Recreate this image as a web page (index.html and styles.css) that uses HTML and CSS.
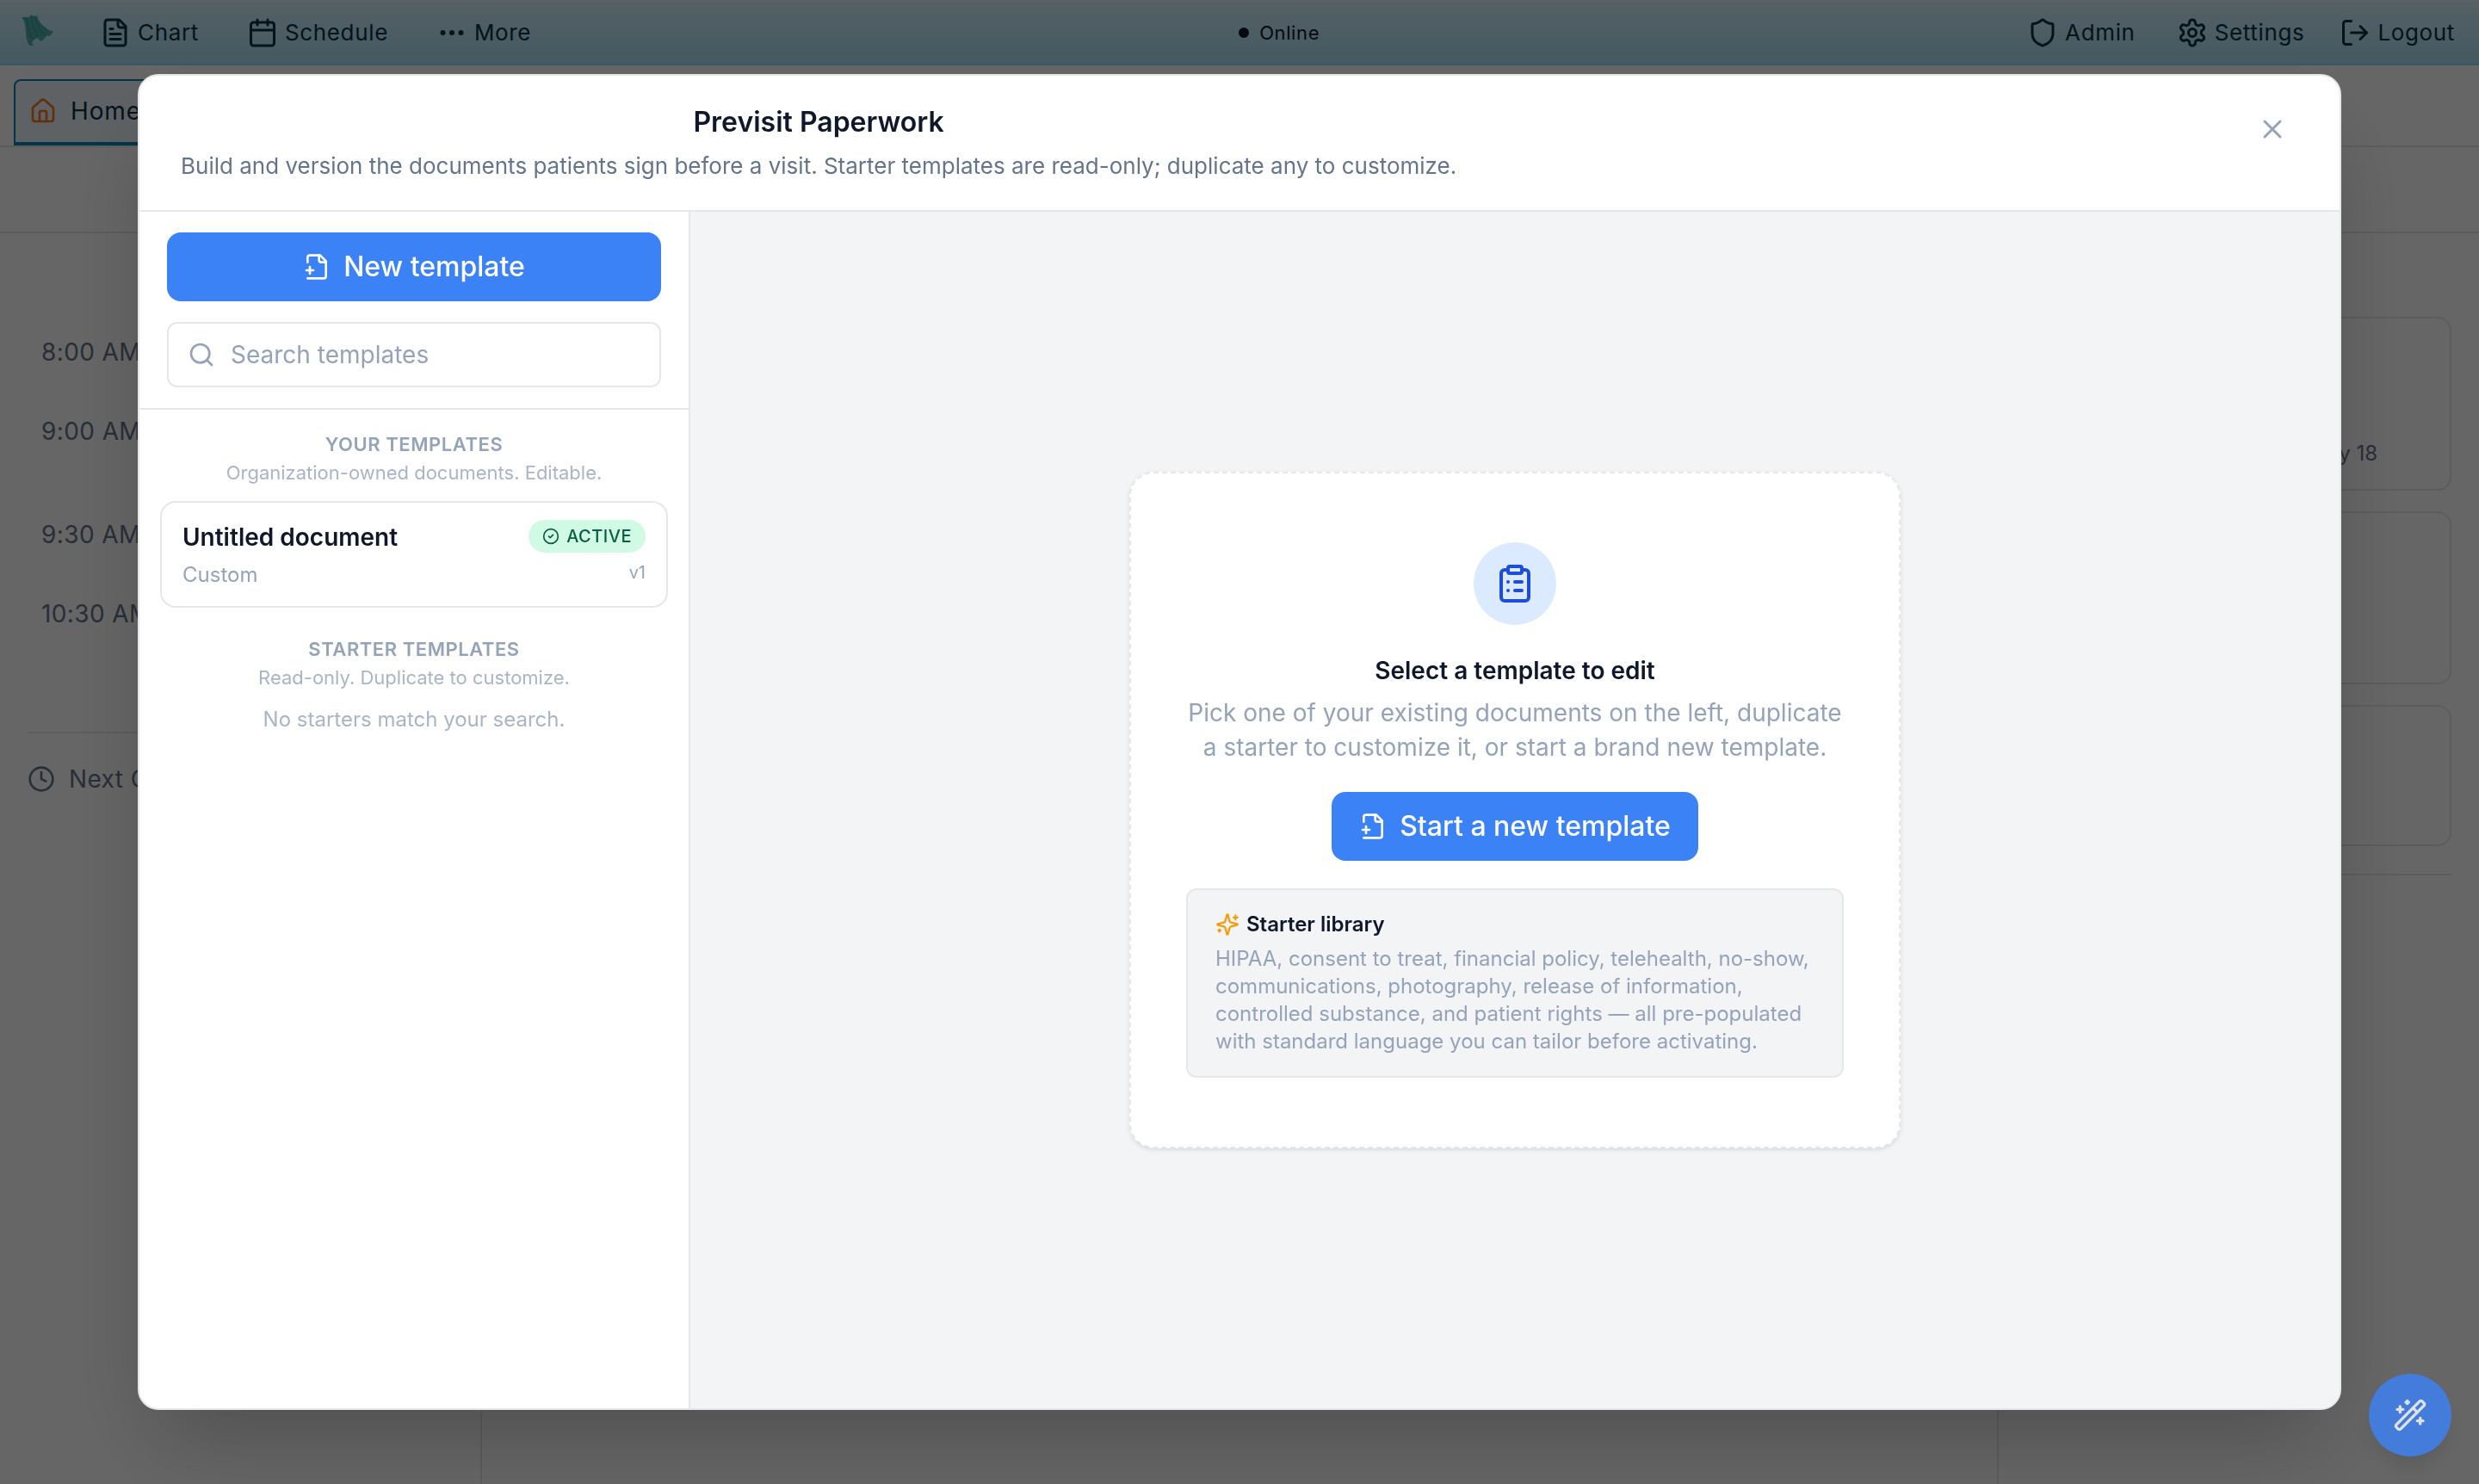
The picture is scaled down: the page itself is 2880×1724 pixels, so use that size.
FILE: index.html
```html
<!DOCTYPE html>
<html lang="en">
<head>
<meta charset="utf-8">
<title>Previsit Paperwork</title>
<link rel="stylesheet" href="styles.css">
</head>
<body>
<svg class="sprite" aria-hidden="true">
  <symbol id="file-plus" viewBox="0 0 24 24"><path d="M4 22h14a2 2 0 0 0 2-2V7l-5-5H6a2 2 0 0 0-2 2v4"/><path d="M14 2v4a2 2 0 0 0 2 2h4"/><path d="M3 15h6"/><path d="M6 12v6"/></symbol>
</svg>

<div class="app">
  <nav class="navbar">
    <svg class="logo" viewBox="0 0 38 37"><path d="M0 3.500Q3 2.500 6 3Q10 3.500 11 .5Q14 2.500 18 1C19 8 25 13 28 15C31 18 34 19 37 19C36 22 34 24 32 25C30 25 29 24 28.500 25C27 28 25 30 22 31L20 29L19 27C16 28 14 29 13 31C12 33 12 35 14 36C10 37 8 35 7 32C5 27 5 21 4.500 15C4 10 3 6 0 3.500Z"/><path class="fold" d="M6 3c1 9 2 17 6 25M11 1c1 9 4 17 8 25M16 3c1 9 6 16 12 21"/></svg>
    <div class="nav-group">
      <a class="nav-item"><svg class="icon i36" viewBox="0 0 24 24"><path d="M15 2H6a2 2 0 0 0-2 2v16a2 2 0 0 0 2 2h12a2 2 0 0 0 2-2V7Z"/><path d="M14 2v4a2 2 0 0 0 2 2h4"/><path d="M10 9H8"/><path d="M16 13H8"/><path d="M16 17H8"/></svg>Chart</a>
      <a class="nav-item"><svg class="icon i36" viewBox="0 0 24 24"><path d="M8 2v4"/><path d="M16 2v4"/><rect width="18" height="18" x="3" y="4" rx="2"/><path d="M3 10h18"/></svg>Schedule</a>
      <a class="nav-item"><svg class="icon i36" viewBox="0 0 24 24"><circle cx="12" cy="12" r="1"/><circle cx="19" cy="12" r="1"/><circle cx="5" cy="12" r="1"/></svg>More</a>
    </div>
    <div class="status"><span class="status-dot"></span>Online</div>
    <div class="nav-group nav-right">
      <a class="nav-item"><svg class="icon i36" viewBox="0 0 24 24"><path d="M20 13c0 5-3.500 7.500-7.660 8.950a1 1 0 0 1-.67-.01C7.500 20.500 4 18 4 13V6a1 1 0 0 1 1-1c2 0 4.500-1.200 6.240-2.720a1.170 1.170 0 0 1 1.520 0C14.510 3.810 17 5 19 5a1 1 0 0 1 1 1z"/></svg>Admin</a>
      <a class="nav-item"><svg class="icon i36" viewBox="0 0 24 24"><path d="M12.220 2h-.44a2 2 0 0 0-2 2v.18a2 2 0 0 1-1 1.730l-.43.25a2 2 0 0 1-2 0l-.15-.08a2 2 0 0 0-2.730.73l-.22.38a2 2 0 0 0 .73 2.730l.15.1a2 2 0 0 1 1 1.720v.51a2 2 0 0 1-1 1.740l-.15.09a2 2 0 0 0-.73 2.730l.22.38a2 2 0 0 0 2.730.73l.15-.08a2 2 0 0 1 2 0l.43.25a2 2 0 0 1 1 1.730V20a2 2 0 0 0 2 2h.44a2 2 0 0 0 2-2v-.18a2 2 0 0 1 1-1.730l.43-.25a2 2 0 0 1 2 0l.15.08a2 2 0 0 0 2.730-.73l.22-.39a2 2 0 0 0-.73-2.730l-.15-.08a2 2 0 0 1-1-1.740v-.5a2 2 0 0 1 1-1.740l.15-.09a2 2 0 0 0 .73-2.730l-.22-.38a2 2 0 0 0-2.730-.73l-.15.08a2 2 0 0 1-2 0l-.43-.25a2 2 0 0 1-1-1.730V4a2 2 0 0 0-2-2z"/><circle cx="12" cy="12" r="3"/></svg>Settings</a>
      <a class="nav-item logout"><svg class="icon i36" viewBox="0 0 24 24"><path d="M9 21H5a2 2 0 0 1-2-2V5a2 2 0 0 1 2-2h4"/><path d="m16 17 5-5-5-5"/><path d="M21 12H9"/></svg>Logout</a>
    </div>
  </nav>

  <div class="tabs">
    <div class="tab"><svg class="icon i32 home-icon" viewBox="0 0 24 24"><path d="M15 21v-8a1 1 0 0 0-1-1h-4a1 1 0 0 0-1 1v8"/><path d="M3 10a2 2 0 0 1 .709-1.528l7-5.999a2 2 0 0 1 2.582 0l7 5.999A2 2 0 0 1 21 10v9a2 2 0 0 1-2 2H5a2 2 0 0 1-2-2z"/></svg>Home</div>
  </div>
  <div class="toolbar"></div>

  <div class="board">
    <aside class="day">
      <div class="slot">8:00 AM</div>
      <div class="slot slot-tall">9:00 AM</div>
      <div class="slot">9:30 AM</div>
      <div class="slot slot-last">10:30 AM</div>
      <div class="next"><svg class="icon i32" viewBox="0 0 24 24"><circle cx="12" cy="12" r="10"/><path d="M12 6v6l4 2"/></svg>Next Opening</div>
    </aside>
    <main class="center"></main>
    <aside class="cards">
      <div class="bg-card first">May 18</div>
      <div class="bg-card"></div>
      <div class="bg-card short"></div>
      <div class="rule"></div>
    </aside>
  </div>
</div>

<button class="fab"><svg class="icon i40" viewBox="0 0 24 24"><path d="m21.640 3.640-1.280-1.280a1.210 1.210 0 0 0-1.720 0L2.360 18.640a1.210 1.210 0 0 0 0 1.720l1.280 1.280a1.200 1.200 0 0 0 1.720 0L21.640 5.360a1.200 1.200 0 0 0 0-1.720"/><path d="m14 7 3 3"/><path d="M5 6v4"/><path d="M19 14v4"/><path d="M10 2v2"/><path d="M7 8H3"/><path d="M21 16h-4"/><path d="M11 3H9"/></svg></button>

<div class="overlay">
  <div class="modal">
    <header class="modal-head">
      <div class="modal-titles">
        <h1>Previsit Paperwork</h1>
        <p>Build and version the documents patients sign before a visit. Starter templates are read-only; duplicate any to customize.</p>
      </div>
      <svg class="icon i36 close" viewBox="0 0 24 24"><path d="M18 6 6 18"/><path d="m6 6 12 12"/></svg>
    </header>
    <div class="modal-body">
      <section class="sidebar">
        <div class="actions">
          <button class="btn"><svg class="icon i32"><use href="#file-plus"/></svg>New template</button>
          <div class="search"><svg class="icon i32" viewBox="0 0 24 24"><circle cx="11" cy="11" r="8"/><path d="m21 21-4.300-4.300"/></svg>Search templates</div>
        </div>
        <div class="list">
          <h2>YOUR TEMPLATES</h2>
          <p class="hint">Organization-owned documents. Editable.</p>
          <article class="template">
            <div class="row">
              <h3>Untitled document</h3>
              <span class="badge"><svg class="icon i20" viewBox="0 0 24 24"><circle cx="12" cy="12" r="10"/><path d="m9 12 2 2 4-4"/></svg>ACTIVE</span>
            </div>
            <div class="row meta"><span>Custom</span><span class="version">v1</span></div>
          </article>
          <h2>STARTER TEMPLATES</h2>
          <p class="hint">Read-only. Duplicate to customize.</p>
          <p class="none">No starters match your search.</p>
        </div>
      </section>
      <section class="stage">
        <div class="empty">
          <div class="bubble"><svg class="icon i48" viewBox="0 0 24 24"><rect width="8" height="4" x="8" y="2" rx="1" ry="1"/><path d="M16 4h2a2 2 0 0 1 2 2v14a2 2 0 0 1-2 2H6a2 2 0 0 1-2-2V6a2 2 0 0 1 2-2h2"/><path d="M12 11h4"/><path d="M12 16h4"/><path d="M8 11h.01"/><path d="M8 16h.01"/></svg></div>
          <h2 class="empty-title">Select a template to edit</h2>
          <p class="empty-text">Pick one of your existing documents on the left, duplicate a starter to customize it, or start a brand new template.</p>
          <button class="btn"><svg class="icon i32"><use href="#file-plus"/></svg>Start a new template</button>
          <div class="library">
            <h3><svg class="icon i28" viewBox="0 0 24 24"><path d="M9.937 15.500A2 2 0 0 0 8.500 14.063l-6.135-1.582a.5.5 0 0 1 0-.962L8.500 9.936A2 2 0 0 0 9.937 8.500l1.582-6.135a.5.5 0 0 1 .963 0L14.063 8.500A2 2 0 0 0 15.500 9.937l6.135 1.581a.5.5 0 0 1 0 .964L15.500 14.063a2 2 0 0 0-1.437 1.437l-1.582 6.135a.5.5 0 0 1-.963 0z"/><path d="M20 3v4"/><path d="M22 5h-4"/><path d="M4 17v2"/><path d="M5 18H3"/></svg>Starter library</h3>
            <p>HIPAA, consent to treat, financial policy, telehealth, no-show, communications, photography, release of information, controlled substance, and patient rights — all pre-populated with standard language you can tailor before activating.</p>
          </div>
        </div>
      </section>
    </div>
  </div>
</div>
</body>
</html>
```
FILE: styles.css
```css
* { box-sizing: border-box; margin: 0; padding: 0; }
html, body { width: 2880px; height: 1724px; overflow: hidden; }
body { font-family: Inter, "Liberation Sans", sans-serif; font-size: 28px; color: #0f172a; background: #fff; }
button { font: inherit; border: 0; }
.sprite { position: absolute; width: 0; height: 0; }

.icon { flex: none; fill: none; stroke: currentColor; stroke-width: 2; stroke-linecap: round; stroke-linejoin: round; overflow: visible; }
.i20 { width: 20px; height: 20px; }
.i28 { width: 28px; height: 28px; }
.i32 { width: 32px; height: 32px; }
.i36 { width: 36px; height: 36px; }
.i40 { width: 40px; height: 40px; }
.i48 { width: 48px; height: 48px; }

/* Application behind the dialog */
.app { display: flex; flex-direction: column; height: 1724px; }
.navbar { display: flex; align-items: center; height: 76px; flex: none; padding: 0 28px 1px 25px; border-top: 2px solid #e2f4fa; border-bottom: 2px solid #95dcf2; background: linear-gradient(#d3f0fb, #a9dff5); color: #083344; }
.logo { width: 38px; height: 37px; margin: -4px 53px 0 0; fill: #4fb0ad; }
.logo .fold { fill: none; stroke: #389b9b; stroke-width: 1.200; }
.nav-group { display: flex; gap: 56px; }
.nav-item { display: flex; align-items: center; gap: 8px; font-size: 26px; letter-spacing: .65px; line-height: 36px; }
.nav-right { margin-left: auto; gap: 48px; }
.logout { margin-left: -7px; }
.status { display: flex; align-items: center; gap: 12px; margin-left: 822px; font-size: 22px; letter-spacing: .6px; color: #0f172a; }
.status-dot { width: 12px; height: 12px; border-radius: 50%; background: currentColor; }

.tabs { display: flex; align-items: flex-end; flex: none; height: 95px; padding-left: 16px; border-bottom: 2px solid #e5e7eb; }
.tab { display: flex; align-items: center; gap: 16px; width: 200px; height: 77px; padding: 0 16px 2px; border: 2px solid #0284b7; border-bottom-width: 4px; border-radius: 8px 8px 0 0; background: #ebf5fb; color: #083344; letter-spacing: .84px; }
.home-icon { color: #f97316; }
.toolbar { flex: none; height: 100px; border-bottom: 2px solid #e5e7eb; }

.board { display: grid; grid-template-columns: 560px 1fr 560px; flex: 1; color: #64748b; }
.day { border-right: 2px solid #e5e7eb; padding: 118px 32px 0; letter-spacing: .4px; }
.slot { height: 92px; padding-left: 16px; line-height: 40px; }
.slot-tall { height: 120px; }
.slot-last { height: 157px; }
.next { display: flex; align-items: center; gap: 16px; height: 108px; border-top: 2px solid #e5e7eb; }
.cards { display: flex; flex-direction: column; gap: 24px; border-left: 2px solid #e5e7eb; padding: 97px 32px 0; }
.bg-card { height: 201px; border: 2px solid #e5e7eb; border-radius: 16px; }
.bg-card.first { display: flex; justify-content: flex-end; align-items: flex-end; height: 202px; padding: 0 84px 25px 0; font-size: 24px; line-height: 32px; }
.bg-card.short { height: 164px; }
.rule { margin-top: 8px; border-top: 2px solid #e5e7eb; }

.fab { position: fixed; right: 32px; bottom: 32px; z-index: 30; display: grid; place-items: center; width: 96px; height: 96px; border-radius: 50%; background: #437cda; color: #dfe0e2; box-shadow: 0 16px 24px -8px rgba(0, 0, 0, .12); }

/* Dialog */
.overlay { position: fixed; inset: 0; z-index: 20; display: grid; place-items: center; background: rgba(0, 0, 0, .6); }
.modal { display: flex; flex-direction: column; width: 2560px; height: 1552px; overflow: hidden; border: 2px solid #e5e7eb; border-radius: 24px; background: #fff; box-shadow: 0 50px 100px -24px rgba(0, 0, 0, .25); }
.modal-head { display: flex; justify-content: space-between; flex: none; height: 158px; padding: 33px 60px 0 48px; border-bottom: 2px solid #e5e7eb; }
.modal-titles { text-align: center; }
.modal-titles h1 { font-size: 32px; font-weight: 600; line-height: 42px; }
.modal-titles p { margin-top: 8px; font-size: 26px; line-height: 43px; color: #64748b; }
.close { margin-top: 11px; color: #94a3b8; }
.modal-body { display: flex; flex: 1; min-height: 0; }
.sidebar { flex: none; width: 640px; border-right: 2px solid #e5e7eb; }
.actions { padding: 24px 32px; border-bottom: 2px solid #e5e7eb; }
.btn { display: flex; align-items: center; justify-content: center; gap: 15px; height: 80px; padding: 0 32px 1px; border-radius: 16px; background: #3b82f6; color: #fff; font-size: 32px; font-weight: 500; }
.actions .btn { width: 100%; }
.search { display: flex; align-items: center; gap: 18px; height: 76px; margin-top: 24px; padding: 0 22px; border: 2px solid #e5e7eb; border-radius: 12px; color: #94a3b8; }

.list { padding: 24px; text-align: center; }
.list h2 { font-size: 22px; font-weight: 600; line-height: 32px; letter-spacing: .55px; color: #94a3b8; }
.hint { font-size: 22px; line-height: 35px; color: #a9b5c6; }
.none { margin-top: 14px; font-size: 24px; line-height: 33px; color: #a9b5c6; }
.template { height: 124px; margin: 15px 0 32px; padding: 20px 24px; border: 2px solid #e5e7eb; border-radius: 18px; }
.row { display: flex; justify-content: space-between; align-items: flex-start; }
.row h3 { font-size: 28px; font-weight: 600; line-height: 40px; }
.badge { display: flex; align-items: center; gap: 8px; height: 38px; padding: 0 16px 1px; border-radius: 19px; background: #d1fae5; color: #065f46; font-size: 20px; font-weight: 500; letter-spacing: .5px; }
.meta { margin-top: 7px; font-size: 24px; line-height: 33px; color: #94a3b8; }
.version { font-size: 20px; line-height: 29px; }

.stage { display: grid; place-items: center; flex: 1; background: #f3f4f6; }
.empty { display: flex; flex-direction: column; align-items: center; width: 896px; height: 786px; padding: 80px 64px; border: 2px dashed #e5e7eb; border-radius: 28px; background: #fff; text-align: center; box-shadow: 0 2px 6px rgba(0, 0, 0, .08), 0 2px 4px -2px rgba(0, 0, 0, .08); }
.empty .bubble { margin-top: -2px; }
.bubble { display: grid; place-items: center; width: 96px; height: 96px; margin-bottom: 2px; border-radius: 50%; background: #dbeafe; color: #1d4ed8; }
.empty .bubble { margin: 0; }
.empty-title { margin-top: 32px; font-size: 28px; font-weight: 600; line-height: 42px; }
.empty-text { margin: 8px 0 32px; line-height: 40px; color: #94a3b8; }
.library { width: 100%; height: 220px; margin-top: 32px; padding: 24px 32px; border: 2px solid #e5e7eb; border-radius: 12px; background: #f3f4f6; text-align: left; font-size: 24px; line-height: 32px; color: #94a3b8; }
.library h3 { display: flex; align-items: center; gap: 8px; margin-bottom: 8px; font-size: 24px; font-weight: 600; color: #0f172a; }
.library h3 .icon { color: #f59e0b; }
```
